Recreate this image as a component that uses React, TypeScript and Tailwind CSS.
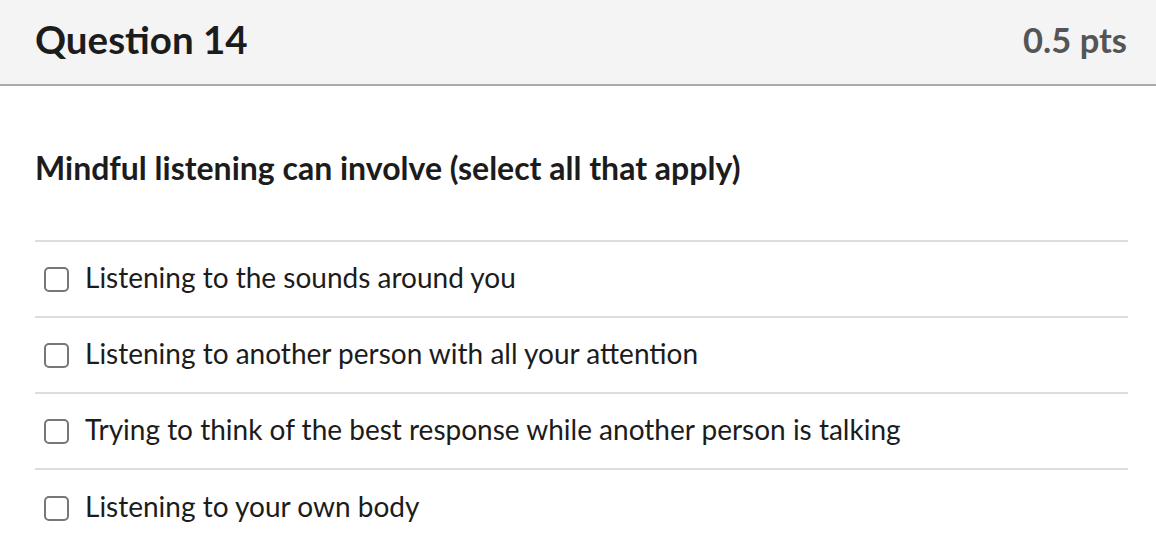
const answers = [
  "Listening to the sounds around you",
  "Listening to another person with all your attention",
  "Trying to think of the best response while another person is talking",
  "Listening to your own body",
];

export default function App() {
  return (
    <div
      className="w-[1156px] h-[550px] bg-white overflow-hidden text-[#1c1c1c]"
      style={{ fontFamily: "Lato, 'Open Sans', sans-serif" }}
    >
      {/* Header */}
      <div className="h-[86px] bg-[#f4f4f4] border-b-2 border-[#aaaaaa] flex items-center justify-between pl-[35px] pr-[29px]">
        <h2 className="text-[38.5px] font-bold leading-none text-[#1c1c1c] -mt-[5px]">
          Question 14
        </h2>
        <span className="text-[34.5px] font-bold leading-none text-[#555555] -mt-[3px]">
          0.5 pts
        </span>
      </div>

      {/* Body */}
      <div className="pl-[35px] pr-[28px]">
        <p className="pt-[64px] text-[32px] font-bold leading-[36px] text-[#1c1c1c]">
          Mindful listening can involve (select all that apply)
        </p>

        <div className="mt-[54px] border-t-2 border-[#dddddd]">
          {answers.map((a, i) => (
            <label
              key={a}
              className={`flex items-center h-[76px] ${
                i < answers.length - 1 ? "border-b-2 border-[#dddddd]" : ""
              }`}
            >
              <span className="ml-[9px] w-[25px] h-[25px] rounded-[5px] border-2 border-[#777777] bg-white shrink-0" />
              <span className="ml-[16px] text-[28px] leading-none text-[#1c1c1c] -mt-[4px]">
                {a}
              </span>
            </label>
          ))}
        </div>
      </div>
    </div>
  );
}
